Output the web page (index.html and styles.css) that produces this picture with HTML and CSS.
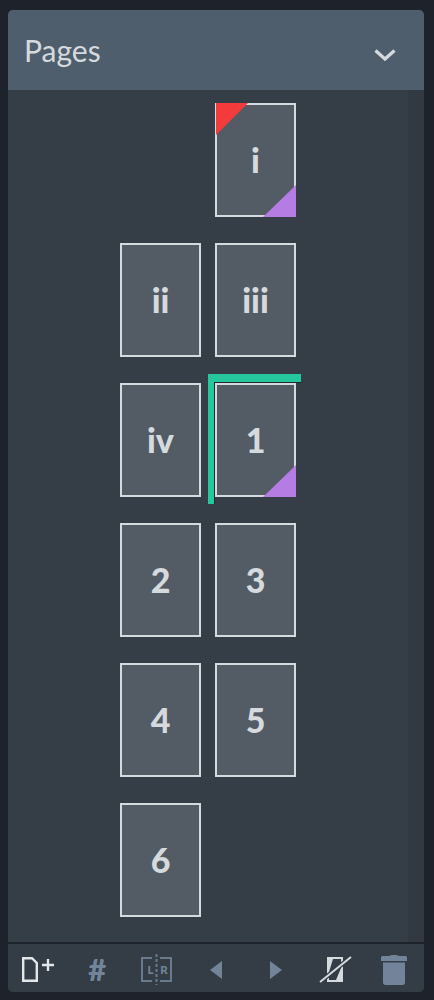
FILE: index.html
```html
<!DOCTYPE html>
<html lang="en">
<head>
<meta charset="utf-8">
<title>Pages</title>
<link rel="stylesheet" href="styles.css">
</head>
<body>
<section class="panel">
  <header class="panel-head">
    <h1 class="panel-title">Pages</h1>
    <svg class="chevron" width="24" height="14" viewBox="0 0 24 14"><path d="M2.5 2.5 12 11 21.500 2.500" fill="none" stroke="#d5dadf" stroke-width="3.200"/></svg>
  </header>
  <div class="panel-body">
    <div class="page-area">
      <div class="page-grid">
        <div class="page page-second"><span class="corner corner-red"></span>i<span class="corner corner-purple"></span></div>
        <div class="page">ii</div>
        <div class="page">iii</div>
        <div class="page">iv</div>
        <div class="page page-marked">1<span class="corner corner-purple"></span></div>
        <div class="page">2</div>
        <div class="page">3</div>
        <div class="page">4</div>
        <div class="page">5</div>
        <div class="page">6</div>
      </div>
    </div>
    <div class="scroll-track"></div>
  </div>
  <footer class="toolbar">
    <div class="tool"><svg width="40" height="34" viewBox="0 0 40 34"><path d="M5.200 6.200H14L18.800 11V28.800H5.200Z" fill="none" stroke="#e4e7ea" stroke-width="2.400"/><path d="M24 13H36M30 7V19" stroke="#e4e7ea" stroke-width="2.400" fill="none"/></svg></div>
    <div class="tool"><span class="hash">#</span></div>
    <div class="tool"><svg width="40" height="34" viewBox="0 0 40 34"><path d="M15 6H5V29H15M23 6H34V29H23" fill="none" stroke="#687a8e" stroke-width="2"/><path d="M19.500 2V33" stroke="#687a8e" stroke-width="2" stroke-dasharray="3 2" fill="none"/><text class="lr" x="13.500" y="21.500" text-anchor="middle">L</text><text class="lr" x="27" y="21.500" text-anchor="middle">R</text></svg></div>
    <div class="tool"><svg width="40" height="34" viewBox="0 0 40 34"><path d="M26 9V27L14 18Z" fill="#71849a"/></svg></div>
    <div class="tool"><svg width="40" height="34" viewBox="0 0 40 34"><path d="M15 9V27L27 18Z" fill="#71849a"/></svg></div>
    <div class="tool"><svg width="40" height="34" viewBox="0 0 40 34"><path d="M12 5H28V30H12Z" fill="#d5dadf"/><path d="M18 7H26V16L21 28H14V20Z" fill="#343c45"/><path d="M5 30 36 5" stroke="#343c45" stroke-width="4.500" fill="none"/><path d="M5 30 36 5" stroke="#d5dadf" stroke-width="2" fill="none"/></svg></div>
    <div class="tool"><svg width="40" height="34" viewBox="0 0 40 34"><path d="M7 5.500C7 4.500 8 4 9 4H15C16 2.500 24 2.500 25 4H31C32 4 33 4.500 33 5.500V9H7Z" fill="#71849a"/><path d="M9 10.500H31V30.500C31 32 30 33 28.500 33H11.500C10 33 9 32 9 30.500Z" fill="#71849a"/></svg></div>
  </footer>
</section>
</body>
</html>
```
FILE: styles.css
```css
* { box-sizing: border-box; }
html, body { margin: 0; height: 1000px; }
body {
  background: #1e232b;
  padding: 10px 10px 8px 8px;
  font-family: "Lato", "Liberation Sans", sans-serif;
  overflow: hidden;
}
.panel {
  height: 982px;
  display: flex;
  flex-direction: column;
  border-radius: 5px;
  overflow: hidden;
  background: #343c45;
}
.panel-head {
  height: 80px;
  flex: none;
  background: #4f5e6d;
  display: flex;
  align-items: center;
  justify-content: space-between;
  padding: 0 27px 0 16px;
}
.panel-title {
  margin: 0;
  font-size: 30px;
  font-weight: 400;
  color: #d5dadf;
}
.chevron { margin-top: 9px; }
.panel-body {
  height: 852px;
  flex: none;
  display: flex;
  background: #353e47;
}
.page-area { flex: 1; padding-top: 13px; }
.scroll-track { width: 16px; background: #333940; }
.page-grid {
  display: grid;
  grid-template-columns: 81px 81px;
  grid-auto-rows: 114px;
  column-gap: 14px;
  row-gap: 26px;
  justify-content: center;
}
.page {
  position: relative;
  border: 2px solid #d5dadf;
  background: #535b65;
  display: flex;
  align-items: center;
  justify-content: center;
  color: #d5dadf;
  font-size: 34px;
  font-weight: 900;
  line-height: 1;
}
.page-second { grid-column: 2; }
.page-marked::before {
  content: "";
  position: absolute;
  left: -9px;
  top: -11px;
  width: 87px;
  height: 122px;
  border-left: 6px solid #26c79d;
  border-top: 8px solid #26c79d;
  box-shadow: inset 1px 1px 0 #23282f;
}
.corner { position: absolute; width: 32px; height: 32px; }
.corner-red {
  left: -1px;
  top: -2px;
  background: #f33b3b;
  clip-path: polygon(0 0, 100% 0, 0 100%);
}
.corner-purple {
  right: -2px;
  bottom: -2px;
  width: 33px;
  background: #b57ce4;
  clip-path: polygon(100% 0, 100% 100%, 0 100%);
}
.toolbar {
  height: 50px;
  flex: none;
  border-top: 2px solid #1e232b;
  background: #343c45;
  display: grid;
  grid-template-columns: repeat(7, 1fr);
  padding-top: 2px;
}
.tool {
  display: flex;
  align-items: center;
  justify-content: center;
}
.tool svg { display: block; }
.hash { color: #71849a; font-size: 31px; font-weight: 900; line-height: 1; }
.lr { font: 900 11.500px "Lato", sans-serif; fill: #71849a; }
```
